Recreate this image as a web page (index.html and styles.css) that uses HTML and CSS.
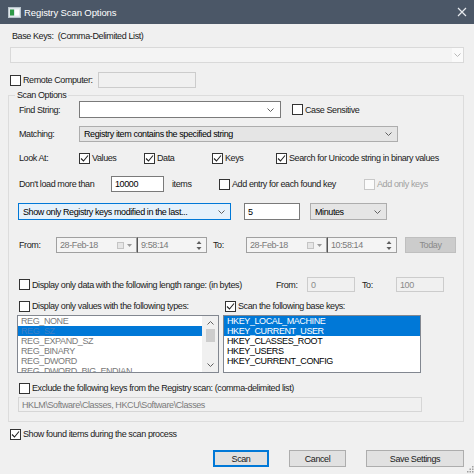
FILE: index.html
```html
<!DOCTYPE html>
<html>
<head>
<meta charset="utf-8">
<title>Registry Scan Options</title>
<link rel="stylesheet" href="styles.css">
</head>
<body>
<div class="window">
  <div class="titlebar">
    <svg class="app-icon" width="13" height="11" viewBox="0 0 13 11"><rect x="0.5" y="0.5" width="12" height="10" fill="#dfe6ea" stroke="#b9c4cc"/><rect x="2" y="2.5" width="4" height="6" fill="#2f9a48"/><rect x="7" y="2.5" width="4" height="6" fill="#ffffff"/></svg>
    <span class="title">Registry Scan Options</span>
    <svg class="close" width="10" height="10" viewBox="0 0 10 10"><path d="M1 1 L9 9 M9 1 L1 9" stroke="#e6eaee" stroke-width="1.2"/></svg>
  </div>

  <div class="content">
    <div class="base-label">Base Keys:&nbsp; (Comma-Delimited List)</div>
    <div class="combo combo-base">
      <span class="combo-btn"><svg width="7" height="4" viewBox="0 0 7 4"><path d="M0.5 0.5 L3.5 3.5 L6.5 0.5" fill="none" stroke="#b8b8b8"/></svg></span>
    </div>

    <div class="row remote-row">
      <span class="cb cb-remote"><span class="box"></span>Remote Computer:</span>
      <span class="tb tb-disabled tb-remote"></span>
    </div>

    <div class="group">
      <span class="group-title">Scan Options</span>

      <div class="row find-row">
        <span class="lbl lbl-first">Find String:</span>
        <span class="tb combo-edit"><svg class="chev" width="7" height="4" viewBox="0 0 7 4"><path d="M0.5 0.5 L3.5 3.5 L6.5 0.5" fill="none" stroke="#606060"/></svg></span>
        <span class="cb cb-case"><span class="box"></span>Case Sensitive</span>
      </div>

      <div class="row match-row">
        <span class="lbl lbl-first">Matching:</span>
        <span class="combo combo-match">Registry item contains the specified string<svg class="chev" width="7" height="4" viewBox="0 0 7 4"><path d="M0.5 0.5 L3.5 3.5 L6.5 0.5" fill="none" stroke="#606060"/></svg></span>
      </div>

      <div class="row look-row">
        <span class="lbl lbl-first">Look At:</span>
        <span class="cb cb-values"><span class="box"><svg width="9" height="9" viewBox="0 0 9 9"><path d="M1 4.5 L3.5 7 L8 1.5" fill="none" stroke="#222" stroke-width="1.1"/></svg></span>Values</span>
        <span class="cb cb-data"><span class="box"><svg width="9" height="9" viewBox="0 0 9 9"><path d="M1 4.5 L3.5 7 L8 1.5" fill="none" stroke="#222" stroke-width="1.1"/></svg></span>Data</span>
        <span class="cb cb-keys"><span class="box"><svg width="9" height="9" viewBox="0 0 9 9"><path d="M1 4.5 L3.5 7 L8 1.5" fill="none" stroke="#222" stroke-width="1.1"/></svg></span>Keys</span>
        <span class="cb"><span class="box"><svg width="9" height="9" viewBox="0 0 9 9"><path d="M1 4.5 L3.5 7 L8 1.5" fill="none" stroke="#222" stroke-width="1.1"/></svg></span>Search for Unicode string in binary values</span>
      </div>

      <div class="row load-row">
        <span class="lbl lbl-load">Don't load more than</span>
        <span class="tb tb-load">10000</span>
        <span class="lbl lbl-items">items</span>
        <span class="cb cb-entry"><span class="box"></span>Add entry for each found key</span>
        <span class="cb cb-disabled"><span class="box"></span>Add only keys</span>
      </div>

      <div class="row show-row">
        <span class="combo combo-show">Show only Registry keys modified in the last...<svg class="chev" width="7" height="4" viewBox="0 0 7 4"><path d="M0.5 0.5 L3.5 3.5 L6.5 0.5" fill="none" stroke="#606060"/></svg></span>
        <span class="tb tb-five">5</span>
        <span class="combo combo-min">Minutes<svg class="chev" width="7" height="4" viewBox="0 0 7 4"><path d="M0.5 0.5 L3.5 3.5 L6.5 0.5" fill="none" stroke="#606060"/></svg></span>
      </div>

      <div class="row from-row">
        <span class="lbl lbl-from">From:</span>
        <span class="dt dt-date">28-Feb-18<span class="cal"></span><svg class="dd" width="5" height="3" viewBox="0 0 5 3"><path d="M0 0 L5 0 L2.5 3 Z" fill="#9a9a9a"/></svg></span>
        <span class="dt dt-time">9:58:14<svg class="spin" width="6" height="11" viewBox="0 0 6 11"><path d="M0.5 4 L3 1 L5.5 4 Z M0.5 7 L3 10 L5.5 7 Z" fill="#606060"/></svg></span>
        <span class="lbl lbl-to">To:</span>
        <span class="dt dt-date">28-Feb-18<span class="cal"></span><svg class="dd" width="5" height="3" viewBox="0 0 5 3"><path d="M0 0 L5 0 L2.5 3 Z" fill="#9a9a9a"/></svg></span>
        <span class="dt dt-time">10:58:14<svg class="spin" width="6" height="11" viewBox="0 0 6 11"><path d="M0.5 4 L3 1 L5.5 4 Z M0.5 7 L3 10 L5.5 7 Z" fill="#606060"/></svg></span>
        <span class="btn btn-today">Today</span>
      </div>

      <div class="row len-row">
        <span class="cb cb-len"><span class="box"></span>Display only data with the following length range: (in bytes)</span>
        <span class="lbl lbl-lfrom">From:</span>
        <span class="tb tb-disabled tb-len">0</span>
        <span class="lbl lbl-lto">To:</span>
        <span class="tb tb-disabled tb-len">100</span>
      </div>

      <div class="row types-row">
        <span class="cb cb-types"><span class="box"></span>Display only values with the following types:</span>
        <span class="cb"><span class="box"><svg width="9" height="9" viewBox="0 0 9 9"><path d="M1 4.5 L3.5 7 L8 1.5" fill="none" stroke="#222" stroke-width="1.1"/></svg></span>Scan the following base keys:</span>
      </div>

      <div class="lists">
        <div class="list list-types">
          <div class="items items-disabled">
            <div class="item">REG_NONE</div>
            <div class="item item-sel-dis">REG_SZ</div>
            <div class="item">REG_EXPAND_SZ</div>
            <div class="item">REG_BINARY</div>
            <div class="item">REG_DWORD</div>
            <div class="item">REG_DWORD_BIG_ENDIAN</div>
          </div>
          <div class="scrollbar">
            <svg class="sb-arrow" width="7" height="4" viewBox="0 0 7 4"><path d="M0.5 3.5 L3.5 0.5 L6.5 3.5" fill="none" stroke="#606060"/></svg>
            <span class="thumb"></span>
            <svg class="sb-arrow sb-down" width="7" height="4" viewBox="0 0 7 4"><path d="M0.5 0.5 L3.5 3.5 L6.5 0.5" fill="none" stroke="#606060"/></svg>
          </div>
        </div>
        <div class="list list-keys">
          <div class="items">
            <div class="item item-sel">HKEY_LOCAL_MACHINE</div>
            <div class="item item-sel">HKEY_CURRENT_USER</div>
            <div class="item">HKEY_CLASSES_ROOT</div>
            <div class="item">HKEY_USERS</div>
            <div class="item">HKEY_CURRENT_CONFIG</div>
          </div>
        </div>
      </div>

      <div class="row excl-row">
        <span class="cb"><span class="box"></span>Exclude the following keys from the Registry scan: (comma-delimited list)</span>
      </div>
      <div class="tb tb-disabled tb-excl">HKLM\Software\Classes, HKCU\Software\Classes</div>
    </div>

    <div class="row found-row">
      <span class="cb"><span class="box"><svg width="9" height="9" viewBox="0 0 9 9"><path d="M1 4.5 L3.5 7 L8 1.5" fill="none" stroke="#222" stroke-width="1.1"/></svg></span>Show found items during the scan process</span>
    </div>

    <div class="row buttons">
      <span class="btn btn-scan">Scan</span>
      <span class="btn btn-cancel">Cancel</span>
      <span class="btn btn-save">Save Settings</span>
    </div>

    <svg class="grip" width="9" height="9" viewBox="0 0 9 9"><g fill="#a0a0a0"><rect x="7" y="1" width="1.5" height="1.5"/><rect x="4.5" y="3.5" width="1.5" height="1.5"/><rect x="7" y="3.5" width="1.5" height="1.5"/><rect x="2" y="6" width="1.5" height="1.5"/><rect x="4.5" y="6" width="1.5" height="1.5"/><rect x="7" y="6" width="1.5" height="1.5"/></g></svg>
  </div>
</div>
</body>
</html>
```

FILE: styles.css
```css
* { box-sizing: border-box; }
html, body { margin: 0; padding: 0; }
body {
  width: 474px;
  height: 474px;
  overflow: hidden;
  background: #f0f0f0;
  font-family: "Liberation Sans", Arial, sans-serif;
  font-size: 9px;
  letter-spacing: -0.4px;
  color: #000;
}
.window {
  width: 474px;
  height: 474px;
  display: flex;
  flex-direction: column;
  background: #f0f0f0;
}
.titlebar {
  height: 24px;
  flex: none;
  background: #4b5767;
  display: flex;
  align-items: center;
  padding-left: 8px;
}
.title {
  color: #ffffff;
  font-size: 9.5px;
  letter-spacing: -0.1px;
  margin-left: 3px;
}
.close { margin-left: auto; margin-right: 7px; }

.content {
  flex: 1;
  position: relative;
  display: flex;
  flex-direction: column;
  padding: 0 10px;
}
.base-label {
  margin-top: 6px;
  margin-left: 2px;
  height: 12px;
  line-height: 12px;
  color: #1a1a1a;
}
.row { display: flex; align-items: center; white-space: nowrap; }
.lbl { flex: none; color: #1a1a1a; }

/* combos */
.combo {
  height: 16px;
  display: flex;
  align-items: center;
  border: 1px solid #adadad;
  background: #e5e5e5;
  padding-left: 4px;
  flex: none;
}
.combo .chev { margin-left: auto; margin-right: 5px; }
.combo-base {
  margin-top: 5px;
  background: #f4f4f4;
  border-color: #d9d9d9;
  padding-left: 0;
}
.combo-btn {
  margin-left: auto;
  width: 11px;
  height: 14px;
  display: flex;
  align-items: center;
  justify-content: center;
  background: #fafafa;
}
.combo-match { width: 319px; }
.combo-show {
  width: 213px;
  height: 17px;
  margin-left: -1px;
  background: #e5f1fb;
  border-color: #0078d7;
}
.combo-min { width: 77px; height: 17px; margin-left: 10px; }

/* text boxes */
.tb {
  height: 100%;
  border: 1px solid #7a7a7a;
  background: #ffffff;
  display: flex;
  align-items: center;
  padding-left: 3px;
  flex: none;
}
.tb-disabled { background: #f0f0f0; border-color: #cccccc; color: #8a8a8a; }
.combo-edit { width: 202px; }
.combo-edit .chev { margin-left: auto; margin-right: 6px; }
.tb-remote { width: 98px; }
.tb-load { width: 53px; }
.tb-five { width: 56px; margin-left: 13px; }
.tb-len { width: 48px; }
.tb-excl {
  width: 404px;
  height: 15px;
  margin-left: -1px;
  margin-top: 3px;
  color: #7a7a7a;
  border-color: #d6d6d6;
}

/* checkboxes */
.cb { display: flex; align-items: center; flex: none; color: #1a1a1a; }
.box {
  width: 11px;
  height: 11px;
  flex: none;
  border: 1px solid #333333;
  background: #ffffff;
  margin-right: 2px;
  display: flex;
  align-items: center;
  justify-content: center;
}
.cb-disabled { color: #a0a0a0; }
.cb-disabled .box { border-color: #c8c8c8; background: #fbfbfb; }

/* rows */
.remote-row { margin-top: 9px; height: 16px; }
.cb-remote { width: 88px; }

.group {
  position: relative;
  margin-top: 7px;
  margin-left: -2px;
  border: 1px solid #dcdcdc;
  padding: 0 0 9px 10px;
  display: flex;
  flex-direction: column;
}
.group-title {
  position: absolute;
  top: -7px;
  left: 6px;
  padding: 0 2px;
  line-height: 12px;
  background: #f0f0f0;
  color: #1a1a1a;
}
.lbl-first { width: 60px; }
.find-row { margin-top: 5px; height: 17px; }
.cb-case { margin-left: 11px; }
.match-row { margin-top: 8px; height: 16px; }
.look-row { margin-top: 9px; height: 14px; }
.cb-values { width: 65px; }
.cb-data { width: 68px; }
.cb-keys { width: 64px; }
.load-row { margin-top: 11px; height: 16px; }
.lbl-load { width: 92px; }
.lbl-items { width: 55px; padding-left: 8px; }
.cb-entry { width: 145px; }
.show-row { margin-top: 11px; height: 17px; }

.from-row { margin-top: 17px; height: 16px; }
.lbl-from { width: 37px; }
.lbl-to { width: 33px; margin-left: 6px; }
.dt {
  height: 16px;
  display: flex;
  align-items: center;
  border: 1px solid #a0a0a0;
  background: #f4f4f4;
  color: #7a7a7a;
  padding-left: 3px;
  flex: none;
}
.dt-date { width: 81px; }
.dt-time { width: 70px; border-left-color: #555555; }
.cal {
  width: 7px;
  height: 7px;
  margin-left: auto;
  border: 1px solid #c4c4c4;
  background: #e6e6e6;
}
.dd { margin: 0 4px 0 3px; }
.spin { margin-left: auto; margin-right: 4px; }

.btn {
  height: 17px;
  display: flex;
  align-items: center;
  justify-content: center;
  border: 1px solid #adadad;
  background: #e1e1e1;
  color: #1a1a1a;
  flex: none;
}
.btn-today {
  width: 51px;
  height: 16px;
  margin-left: 8px;
  background: #cccccc;
  border-color: #bfbfbf;
  color: #8a8a8a;
}

.len-row { margin-top: 24px; height: 15px; }
.cb-len { width: 257px; }
.lbl-lfrom { width: 31px; }
.lbl-lto { width: 34px; margin-left: 7px; }

.types-row { margin-top: 8px; height: 12px; }
.cb-types { width: 206px; }

.lists {
  display: flex;
  margin-top: 3px;
  margin-left: -2px;
  height: 58px;
  gap: 4px;
}
.list {
  border: 1px solid #828790;
  background: #ffffff;
  display: flex;
  overflow: hidden;
}
.list-types { width: 202px; }
.list-keys { width: 198px; }
.items { flex: 1; display: flex; flex-direction: column; }
.item {
  height: 10px;
  line-height: 10px;
  padding-left: 3px;
  white-space: nowrap;
  flex: none;
}
.items-disabled { color: #7a7a7a; }
.item-sel { background: #0078d7; color: #ffffff; }
.item-sel-dis { background: #0078d7; color: #3f7fc4; }
.scrollbar {
  width: 16px;
  flex: none;
  background: #f0f0f0;
  display: flex;
  flex-direction: column;
  align-items: center;
}
.sb-arrow { margin-top: 5px; flex: none; }
.thumb {
  width: 9px;
  height: 13px;
  margin-top: 4px;
  background: #cdcdcd;
}
.sb-down { margin-top: auto; margin-bottom: 5px; }

.excl-row { margin-top: 9px; height: 12px; }

.found-row { margin-top: 6px; height: 12px; }

.buttons {
  margin-top: 10px;
  height: 17px;
  justify-content: flex-end;
  gap: 20px;
}
.btn-scan {
  width: 56px;
  border-color: #0078d7;
  box-shadow: inset 0 0 0 1px #0078d7;
}
.btn-cancel { width: 57px; }
.btn-save { width: 98px; }

.grip {
  position: absolute;
  right: 0;
  bottom: 0;
}
```
